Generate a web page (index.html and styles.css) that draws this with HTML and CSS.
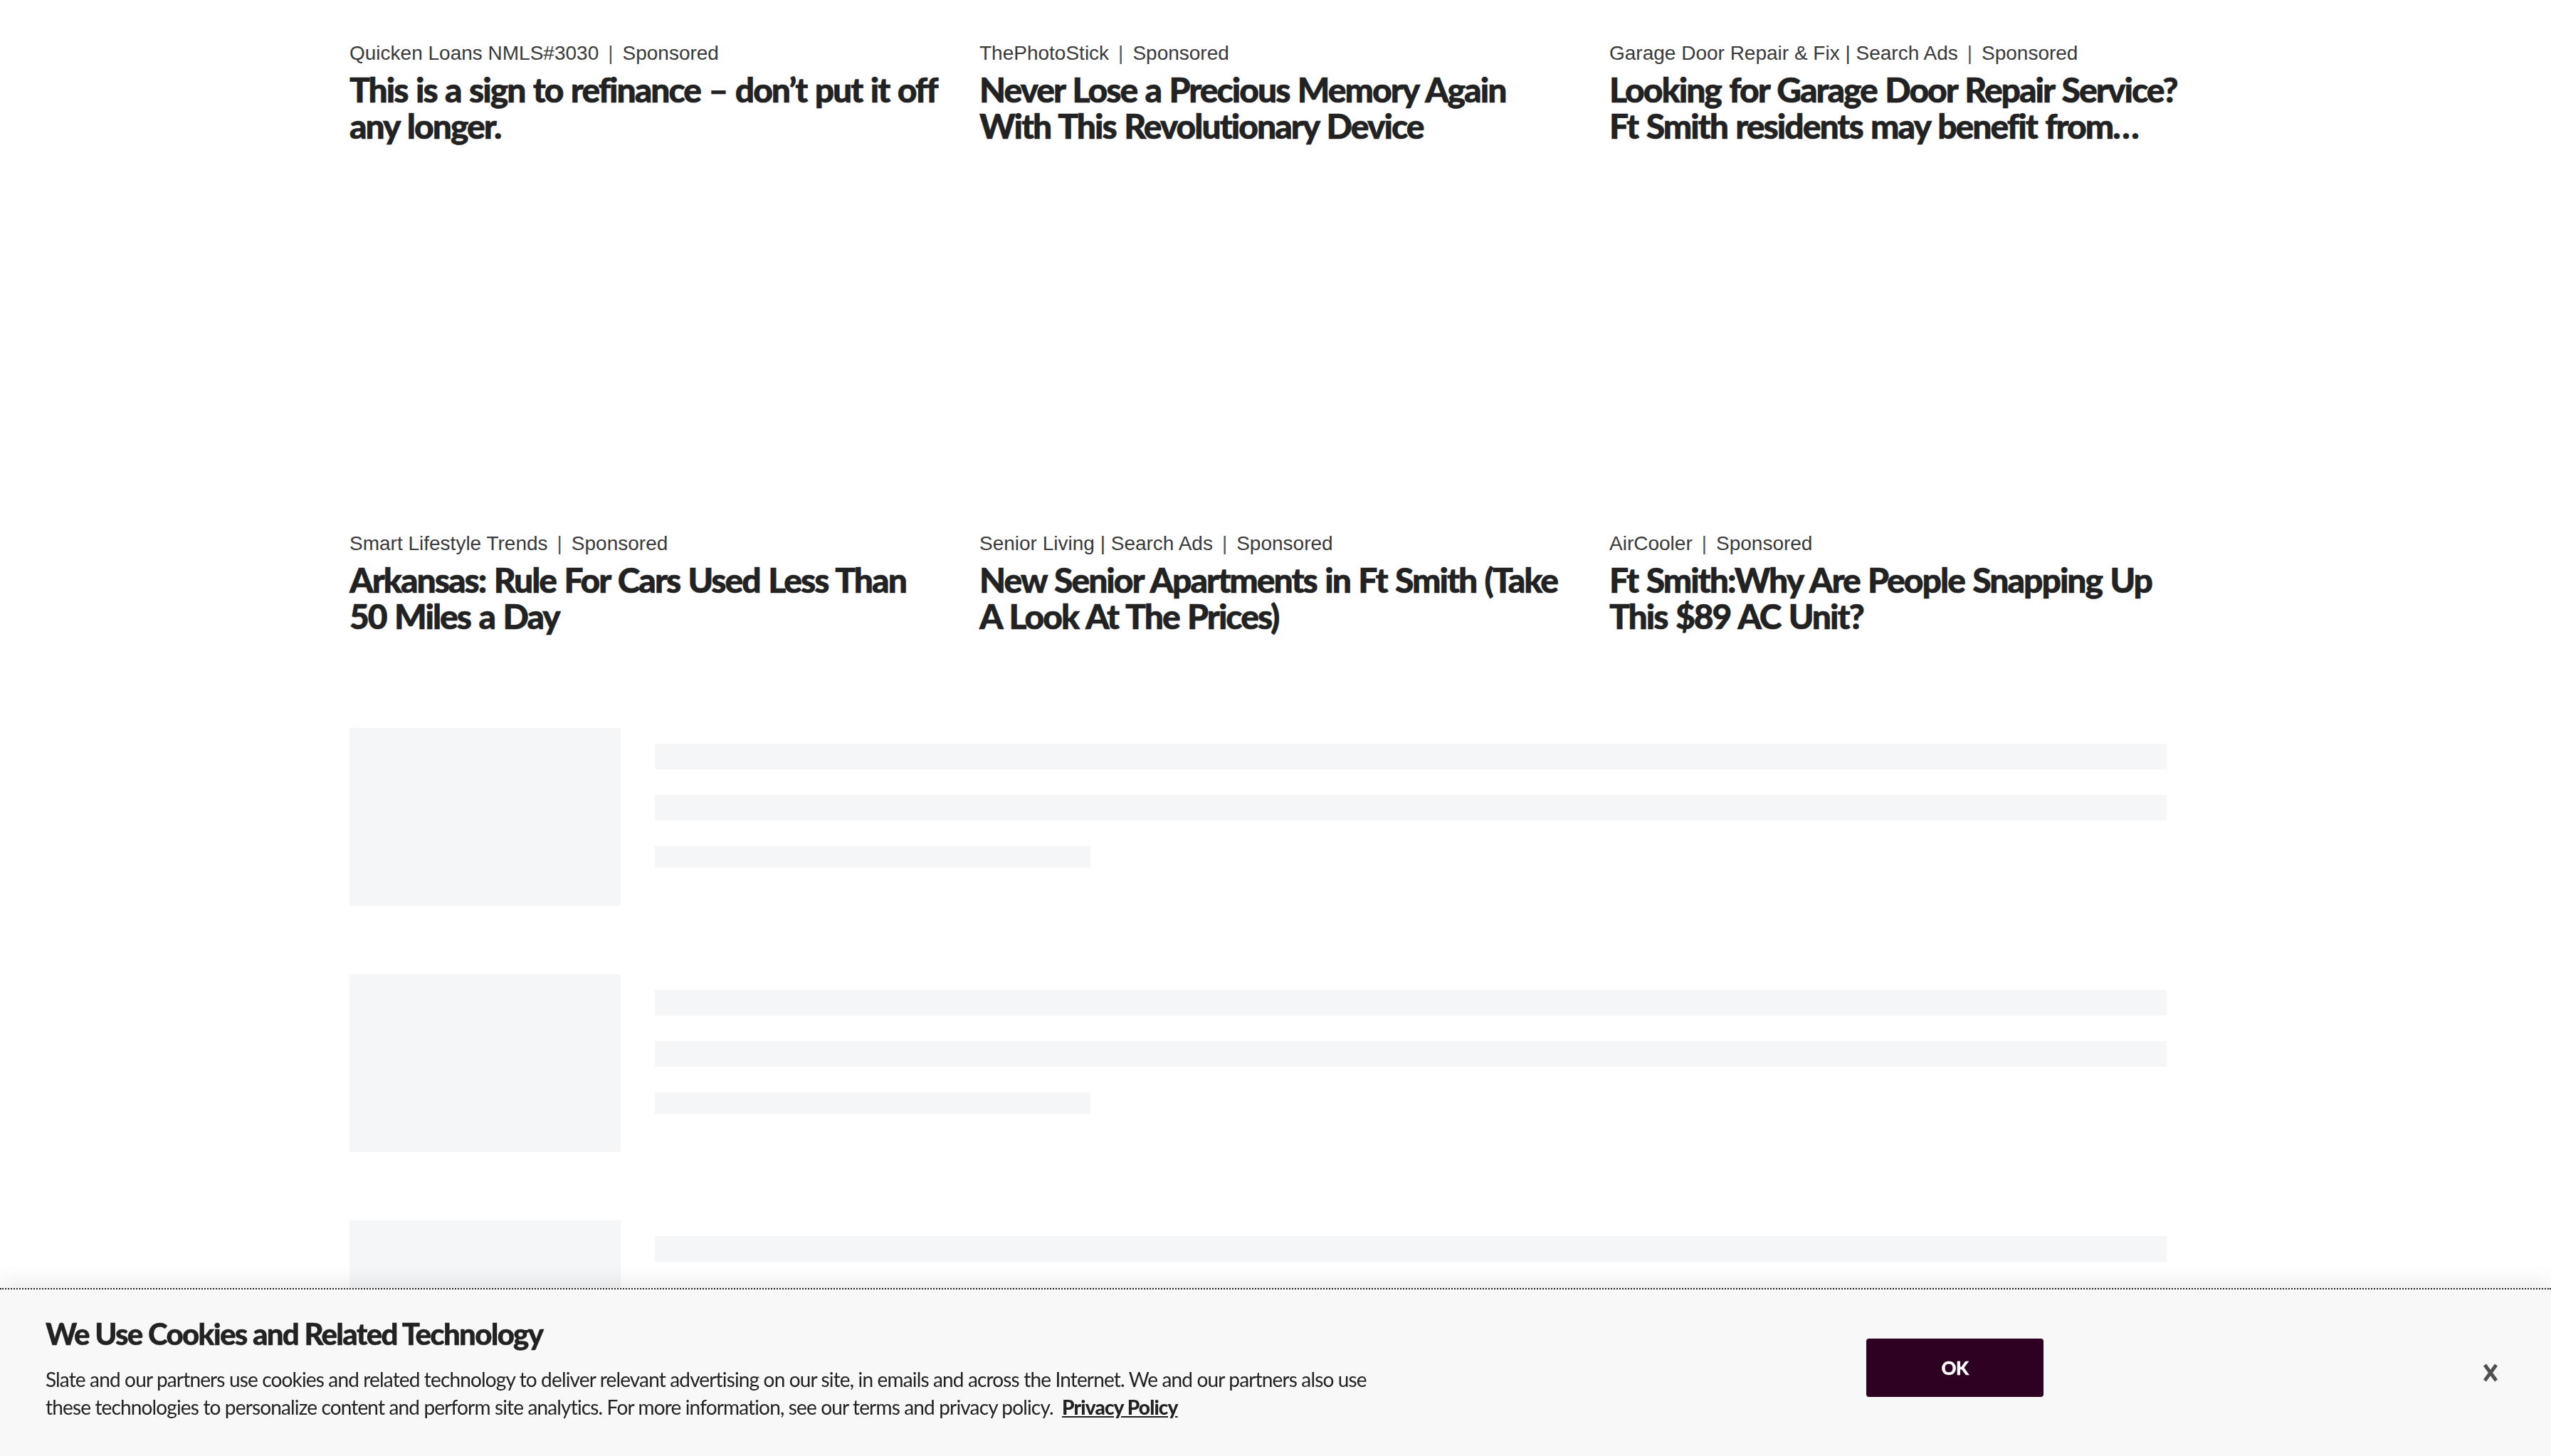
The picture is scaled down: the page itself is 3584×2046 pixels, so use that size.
FILE: index.html
```html
<!DOCTYPE html>
<html lang="en">
<head>
<meta charset="utf-8">
<title>Slate</title>
<link rel="stylesheet" href="styles.css">
</head>
<body>
<main class="page">
  <section class="ads">
    <article class="ad">
      <div class="ad-media"></div>
      <div class="ad-meta">Quicken Loans NMLS#3030<span class="sep">|</span>Sponsored</div>
      <h3 class="ad-title">This is a sign to refinance – don’t put it off<br>any longer.</h3>
    </article>
    <article class="ad">
      <div class="ad-media"></div>
      <div class="ad-meta">ThePhotoStick<span class="sep">|</span>Sponsored</div>
      <h3 class="ad-title">Never Lose a Precious Memory Again<br>With This Revolutionary Device</h3>
    </article>
    <article class="ad">
      <div class="ad-media"></div>
      <div class="ad-meta">Garage Door Repair &amp; Fix | Search Ads<span class="sep">|</span>Sponsored</div>
      <h3 class="ad-title">Looking for Garage Door Repair Service?<br>Ft Smith residents may benefit from…</h3>
    </article>
    <article class="ad">
      <div class="ad-media"></div>
      <div class="ad-meta">Smart Lifestyle Trends<span class="sep">|</span>Sponsored</div>
      <h3 class="ad-title">Arkansas: Rule For Cars Used Less Than<br>50 Miles a Day</h3>
    </article>
    <article class="ad">
      <div class="ad-media"></div>
      <div class="ad-meta">Senior Living | Search Ads<span class="sep">|</span>Sponsored</div>
      <h3 class="ad-title">New Senior Apartments in Ft Smith (Take<br>A Look At The Prices)</h3>
    </article>
    <article class="ad">
      <div class="ad-media"></div>
      <div class="ad-meta">AirCooler<span class="sep">|</span>Sponsored</div>
      <h3 class="ad-title">Ft Smith:Why Are People Snapping Up<br>This $89 AC Unit?</h3>
    </article>
  </section>

  <section class="skeletons">
    <div class="sk-row">
      <div class="sk-img"></div>
      <div class="sk-lines">
        <div class="sk-line"></div>
        <div class="sk-line"></div>
        <div class="sk-line sk-line--short"></div>
      </div>
    </div>
    <div class="sk-row">
      <div class="sk-img"></div>
      <div class="sk-lines">
        <div class="sk-line"></div>
        <div class="sk-line"></div>
        <div class="sk-line sk-line--short"></div>
      </div>
    </div>
    <div class="sk-row">
      <div class="sk-img"></div>
      <div class="sk-lines">
        <div class="sk-line"></div>
        <div class="sk-line"></div>
        <div class="sk-line sk-line--short"></div>
      </div>
    </div>
  </section>
</main>

<div class="cookie">
  <div class="cookie-text">
    <h2 class="cookie-title">We Use Cookies and Related Technology</h2>
    <p class="cookie-body">Slate and our partners use cookies and related technology to deliver relevant advertising on our site, in emails and across the Internet. We and our partners also use these technologies to personalize content and perform site analytics. For more information, see our terms and privacy policy. <a class="cookie-link" href="#">Privacy Policy</a></p>
  </div>
  <button class="cookie-ok" type="button">OK</button>
  <button class="cookie-close" type="button" aria-label="Close">
    <svg width="22" height="28" viewBox="0 0 22 28"><path d="M3 3 L19 25 M19 3 L3 25" stroke="#505050" stroke-width="5" stroke-linecap="butt" fill="none"/></svg>
  </button>
</div>
</body>
</html>
```
FILE: styles.css
```css
html, body {
  margin: 0;
  padding: 0;
  background: #fff;
  overflow: hidden;
}
body {
  font-family: "Liberation Sans", Arial, sans-serif;
  color: #222;
}
.page {
  width: 2602px;
  margin: -439px auto 0;
}
.ads {
  display: grid;
  grid-template-columns: repeat(3, 832px);
  column-gap: 53px;
  row-gap: 48px;
}
.ad-media {
  height: 470px;
  margin-bottom: 26px;
}
.ad-meta {
  font-size: 28px;
  line-height: 36px;
  color: #3a3a3a;
  white-space: nowrap;
}
.sep {
  margin: 0 13px;
  color: #555;
}
.ad-title {
  margin: 7px 0 0;
  font-family: Lato, "Liberation Sans", sans-serif;
  font-weight: 900;
  font-size: 48px;
  line-height: 51px;
  letter-spacing: -2px;
  word-spacing: 2px;
  white-space: nowrap;
  color: #222;
  -webkit-text-stroke: 0.6px #222;
}
.skeletons {
  margin-top: 132px;
  padding-right: 49px;
  display: flex;
  flex-direction: column;
  gap: 96px;
}
.sk-row {
  display: flex;
  gap: 48px;
}
.sk-img {
  flex: none;
  width: 381px;
  height: 250px;
  background: #f5f6f7;
}
.sk-lines {
  flex: 1;
  display: flex;
  flex-direction: column;
  gap: 36px;
  padding-top: 22px;
}
.sk-line {
  height: 36px;
  background: #f5f6f7;
}
.sk-line--short {
  width: 612px;
  height: 30px;
}
.cookie {
  position: fixed;
  left: 0;
  right: 0;
  bottom: 0;
  height: 236px;
  box-sizing: border-box;
  padding: 0 61px 14px 64px;
  background: #f8f8f8;
  border-top: 2px dotted #222;
  box-shadow: 0 -6px 30px rgba(0, 0, 0, 0.09);
  display: flex;
  align-items: center;
}
.cookie-text {
  flex: none;
  width: 1870px;
  margin-top: 4px;
}
.cookie-title {
  margin: 0 0 22px;
  font-family: Lato, sans-serif;
  font-weight: 900;
  font-size: 42px;
  line-height: 46px;
  letter-spacing: -1.7px;
  color: #222;
  -webkit-text-stroke: 0.4px #222;
}
.cookie-body {
  margin: 0;
  font-family: Lato, sans-serif;
  font-size: 28px;
  line-height: 39px;
  letter-spacing: -0.85px;
  color: #222;
}
.cookie-link {
  margin-left: 6px;
  font-weight: 900;
  color: #222;
  text-decoration: underline;
}
.cookie-ok {
  flex: none;
  width: 249px;
  height: 82px;
  margin-left: auto;
  margin-right: 604px;
  border: 0;
  border-radius: 4px;
  background: #2e0022;
  color: #fff;
  font-family: Lato, sans-serif;
  font-weight: 900;
  font-size: 26px;
  letter-spacing: -0.5px;
  -webkit-text-stroke: 0.3px #fff;
}
.cookie-close {
  flex: none;
  width: 48px;
  height: 48px;
  margin-top: 14px;
  padding: 0;
  border: 0;
  background: transparent;
  display: flex;
  align-items: center;
  justify-content: center;
}
```
